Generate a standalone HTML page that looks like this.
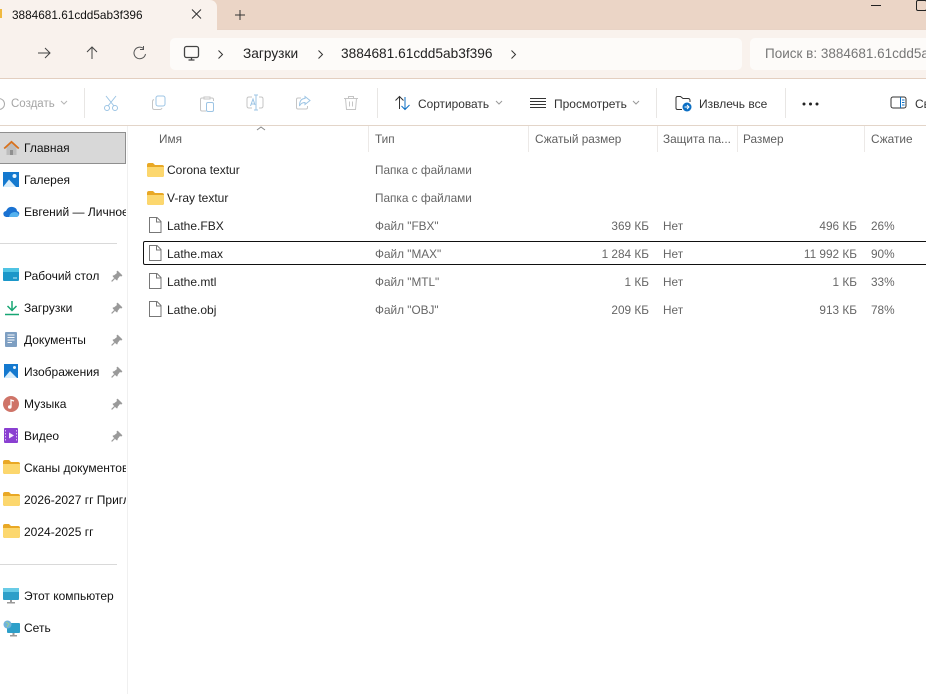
<!DOCTYPE html>
<html lang="ru"><head><meta charset="utf-8"><title>3884681.61cdd5ab3f396</title>
<style>
html,body{margin:0;padding:0;background:#fff}
#a{position:relative;width:926px;height:694px;overflow:hidden;background:#fff;font-family:"Liberation Sans",sans-serif;font-size:12px;color:#1a1a1a}
#a div,#a svg{position:absolute}
.t{white-space:nowrap;line-height:16px;height:16px}
.s{font-size:12px;color:#111;left:24px;width:102px;overflow:hidden}
.h{color:#5f5f5f;top:131px;font-size:11.8px}
.c{color:#666;font-size:11.8px}
.r{text-align:right;color:#666;font-size:11.8px}
.n{left:167px;color:#222;font-size:12px}
.v{background:#ece9e7;width:1px;top:126px;height:26px}
.d{background:#e8e6e4;width:1px;top:88px;height:30px}
.g{color:#333;font-size:12px;top:96px}
</style></head><body><div id="a">

<div style="left:0;top:0;width:926px;height:30px;background:#ebd5c6"></div>
<div style="left:0;top:29px;width:926px;height:50px;background:#f9f2ed;border-top:1px solid #e8d3c5;border-bottom:1px solid #e3cfc0;box-sizing:border-box"></div>
<div style="left:0;top:0;width:217px;height:31px;background:#f9f2ed;border-top-right-radius:7px"></div>
<div style="left:0;top:9px;width:2px;height:9px;background:#f0b93f"></div>
<div class="t" style="left:12px;top:7px;color:#111;font-size:11.8px">3884681.61cdd5ab3f396</div>
<svg style="left:190px;top:7px" width="14" height="14" fill="none" stroke="#333"><path d="M2 2.500L11 11.500M11 2.500L2 11.500"/></svg>
<svg style="left:233px;top:8px" width="14" height="14" fill="none" stroke="#333"><path d="M7 2V12M2 7H12"/></svg>
<div style="left:871px;top:5px;width:10px;height:1px;background:#222"></div>
<div style="left:916px;top:0;width:9px;height:9px;border:1px solid #222;border-radius:2px"></div>

<svg style="left:36px;top:45px" width="16" height="16" fill="none" stroke="#444"><path d="M2 8H14M9 3L14 8L9 13"/></svg>
<svg style="left:84px;top:45px" width="16" height="16" fill="none" stroke="#444"><path d="M8 14V2M3 7L8 2L13 7"/></svg>
<svg style="left:132px;top:45px" width="16" height="16" fill="none" stroke="#555"><path d="M13.500 9A5.800 5.800 0 1 1 11.500 3.500M11.500 1V4.500H8"/></svg>
<div style="left:170px;top:38px;width:572px;height:32px;background:#fdfbf9;border-radius:5px"></div>
<svg style="left:183px;top:45px" width="17" height="17" fill="none" stroke="#444" stroke-width="1.300"><rect x="1.500" y="1.500" width="14" height="11" rx="2"/><path d="M5.500 15H11.500M8.500 13V15"/></svg>
<svg style="left:218px;top:50px" width="6" height="10" fill="none" stroke="#333"><path d="M.5.500L4.500 4.500L.5 8.500"/></svg>
<div class="t" style="left:243px;top:46px;font-size:13.7px;color:#222">Загрузки</div>
<svg style="left:318px;top:50px" width="6" height="10" fill="none" stroke="#333"><path d="M.5.500L4.500 4.500L.5 8.500"/></svg>
<div class="t" style="left:341px;top:46px;font-size:13.7px;color:#222">3884681.61cdd5ab3f396</div>
<svg style="left:511px;top:50px" width="6" height="10" fill="none" stroke="#333"><path d="M.5.500L4.500 4.500L.5 8.500"/></svg>
<div style="left:750px;top:38px;width:190px;height:32px;background:#fdfbf9;border-radius:5px"></div>
<div class="t" style="left:765px;top:46px;font-size:13.5px;color:#777">Поиск в: 3884681.61cdd5a</div>

<svg style="left:0;top:96px" width="6" height="16" fill="none" stroke="#aaa"><circle cx="-1" cy="8" r="5.500"/></svg>
<div class="t" style="left:11px;top:96px;color:#a5a5a5;font-size:11.5px">Создать</div>
<svg style="left:60px;top:100px" width="8" height="6" fill="none" stroke="#b5b5b5"><path d="M1 1L4 4L7 1"/></svg>
<div class="d" style="left:84px"></div>
<svg style="left:103px;top:95px" width="16" height="17" fill="none" stroke="#9cc4e4"><path d="M3 1L11 11M13 1L5 11"/><circle cx="4" cy="13" r="2.500"/><circle cx="12" cy="13" r="2.500"/></svg>
<svg style="left:151px;top:95px" width="16" height="16" fill="none" stroke="#9cc4e4"><rect x="5" y="1" width="9" height="10" rx="2"/><path d="M3 4.500Q1.500 5 1.500 6.500V12.500Q1.500 14.500 3.500 14.500H9Q10.500 14.500 11 13" stroke="#c5c5c5"/></svg>
<svg style="left:199px;top:95px" width="16" height="17" fill="none" stroke="#c5c5c5"><path d="M5 3H3Q1.500 3 1.500 4.500V14.500Q1.500 16 3 16H7M11 3H13Q14.500 3 14.500 4.500V6M5 2H11V4H5Z"/><rect x="7.500" y="7.500" width="7" height="9" rx="1.500" stroke="#9cc4e4"/></svg>
<svg style="left:246px;top:94px" width="18" height="18" fill="none" stroke="#c5c5c5"><path d="M6 3H3Q1 3 1 5V12Q1 14 3 14H6M13 3H15Q17 3 17 5V12Q17 14 15 14H13"/><path d="M10 1V16M8 1H12M8 16H12" stroke="#9cc4e4"/><path d="M4.500 12L7 5L9 11M5.500 10H8.500" stroke="#9cc4e4"/></svg>
<svg style="left:295px;top:95px" width="16" height="16" fill="none" stroke="#c5c5c5"><path d="M6 3H3Q1.500 3 1.500 4.500V12.500Q1.500 14 3 14H11Q12.500 14 12.500 12.500V11"/><path d="M10 1.500L15 5.500L10 9.500V7.500Q6 7.500 4.500 11Q4.500 3.500 10 3.500Z" stroke="#9cc4e4"/></svg>
<svg style="left:343px;top:95px" width="16" height="16" fill="none" stroke="#c5c5c5"><path d="M1 3.500H15M5.500 3.500V1.500H10.500V3.500M2.500 3.500L3.500 14.500H12.500L13.500 3.500M6.500 6.500V11.500M9.500 6.500V11.500"/></svg>
<div class="d" style="left:377px"></div>
<svg style="left:394px;top:95px" width="17" height="16" fill="none" stroke="#333"><path d="M5.500 14V1.500M1.500 5.500L5.500 1.500L9.500 5.500"/><path d="M11 2V14.500M7.500 11L11 14.500L15.500 10" stroke="#0b6fc4"/></svg>
<div class="t g" style="left:418px;font-size:11.9px">Сортировать</div>
<svg style="left:495px;top:100px" width="8" height="6" fill="none" stroke="#999"><path d="M1 1L4 4L7 1"/></svg>
<svg style="left:530px;top:97px" width="16" height="12" fill="none" stroke="#333"><path d="M0 1.500H16M0 4.500H16M0 7.500H16M0 10.500H16"/></svg>
<div class="t g" style="left:554px">Просмотреть</div>
<svg style="left:632px;top:100px" width="8" height="6" fill="none" stroke="#999"><path d="M1 1L4 4L7 1"/></svg>
<div class="d" style="left:656px"></div>
<svg style="left:675px;top:95px" width="18" height="17" fill="none" stroke="#333"><path d="M7 14.500H2.500Q1 14.500 1 13V3Q1 1.500 2.500 1.500H5.500L8 3.500H13Q15 3.500 15 5.500V7"/><circle cx="12" cy="12" r="4.500" fill="#0b6fc4" stroke="none"/><path d="M9.500 12H14M12 10L14 12L12 14" stroke="#fff"/></svg>
<div class="t g" style="left:699px">Извлечь все</div>
<div class="d" style="left:785px"></div>
<svg style="left:802px;top:102px" width="18" height="4" fill="#222"><circle cx="2" cy="2" r="1.500"/><circle cx="8.500" cy="2" r="1.500"/><circle cx="15" cy="2" r="1.500"/></svg>
<svg style="left:890px;top:96px" width="18" height="14" fill="none" stroke="#333"><rect x="1" y="1" width="15" height="11" rx="2"/><path d="M10.500 1V12" stroke="#0b6fc4"/><path d="M12 4H14.500M12 6.500H14.500M12 9H14.500" stroke="#0b6fc4"/></svg>
<div class="t g" style="left:915px">Св</div>

<div style="left:0;top:125px;width:926px;height:1px;background:#e3d5c9"></div>
<div style="left:127px;top:126px;width:1px;height:568px;background:#f0f0f0"></div>

<div style="left:-2px;top:132px;width:126px;height:30px;background:#d8d8d8;border:1px solid #8f8f8f"></div>
<svg style="left:3px;top:140px" width="17" height="16"><path d="M3.500 7V15H13.500V7L8.500 2.500Z" fill="#bdbdbd"/><rect x="7" y="10" width="3" height="5" fill="#8f8f8f"/><path d="M1.200 8.500L8.500 1.800L15.800 8.500" fill="none" stroke="#d9711c" stroke-width="1.800"/></svg>
<div class="t s" style="top:140px">Главная</div>
<svg style="left:3px;top:172px" width="16" height="16"><rect width="16" height="15" fill="#1479cf"/><path d="M0 15L6 7.500L13 15Z" fill="#d8eefc"/><circle cx="11.500" cy="4" r="2" fill="#e8f6ff"/></svg>
<div class="t s" style="top:172px">Галерея</div>
<svg style="left:3px;top:205px" width="17" height="13"><path d="M1 11Q-1 7 3 6Q5 1 10 2Q14 3 14 6Q17 7 16 10Q15 12 13 12H3Z" fill="#1a72d2"/><path d="M6 12Q7 7 12 7Q15 7 16 10Q15 12 13 12Z" fill="#55b2ee"/></svg>
<div class="t s" style="top:204px">Евгений — Личное</div>
<div style="left:0;top:243px;width:117px;height:1px;background:#d9d9d9"></div>

<svg style="left:3px;top:268px" width="16" height="14"><rect width="16" height="13" rx="1" fill="#1b97c9"/><rect x="0" y="0" width="16" height="4" fill="#4fc3e3"/><path d="M10 10H14" stroke="#bfeaf8"/></svg>
<div class="t s" style="top:268px">Рабочий стол</div>
<svg style="left:5px;top:300px" width="14" height="16" fill="none" stroke="#17a673" stroke-width="1.500"><path d="M7 1V10M2.500 6L7 10.500L11.500 6M0 14.500H14"/></svg>
<div class="t s" style="top:300px">Загрузки</div>
<svg style="left:5px;top:332px" width="12" height="16"><rect width="12" height="15" rx="1" fill="#7e9fc2"/><path d="M2.500 3H9.500M2.500 5.500H9.500M2.500 8H9.500M2.500 10.500H7" stroke="#f4f7fb"/></svg>
<div class="t s" style="top:332px">Документы</div>
<svg style="left:4px;top:364px" width="14" height="14"><rect width="14" height="14" fill="#1479cf"/><path d="M0 14L6 7L13 14Z" fill="#d8eefc"/><circle cx="10.500" cy="3.500" r="1.500" fill="#e8f6ff"/></svg>
<div class="t s" style="top:364px">Изображения</div>
<svg style="left:3px;top:396px" width="16" height="16"><circle cx="8" cy="8" r="8" fill="#cf7468"/><path d="M8 11V4L11 5" fill="none" stroke="#fff" stroke-width="1.300"/><circle cx="6.800" cy="11" r="1.800" fill="#fff"/></svg>
<div class="t s" style="top:396px">Музыка</div>
<svg style="left:4px;top:428px" width="14" height="16"><rect width="14" height="15" rx="1" fill="#8a3fd1"/><path d="M5 4.500L10 7.500L5 10.500Z" fill="#f3e9fc"/><path d="M1.500 2V13M12.500 2V13" stroke="#d9bdf3" stroke-dasharray="1.500 1.500"/></svg>
<div class="t s" style="top:428px">Видео</div>

<svg style="left:3px;top:460px" width="17" height="14"><path d="M0 2Q0 0 2 0H6L8 2H15Q17 2 17 4V12Q17 14 15 14H2Q0 14 0 12Z" fill="#e9a825"/><path d="M0 4H17V12Q17 14 15 14H2Q0 14 0 12Z" fill="#fcd76e"/></svg>
<div class="t s" style="top:460px">Сканы документов</div>
<svg style="left:3px;top:492px" width="17" height="14"><path d="M0 2Q0 0 2 0H6L8 2H15Q17 2 17 4V12Q17 14 15 14H2Q0 14 0 12Z" fill="#e9a825"/><path d="M0 4H17V12Q17 14 15 14H2Q0 14 0 12Z" fill="#fcd76e"/></svg>
<div class="t s" style="top:492px">2026-2027 гг Пригл</div>
<svg style="left:3px;top:524px" width="17" height="14"><path d="M0 2Q0 0 2 0H6L8 2H15Q17 2 17 4V12Q17 14 15 14H2Q0 14 0 12Z" fill="#e9a825"/><path d="M0 4H17V12Q17 14 15 14H2Q0 14 0 12Z" fill="#fcd76e"/></svg>
<div class="t s" style="top:524px">2024-2025 гг</div>
<div style="left:0;top:564px;width:117px;height:1px;background:#d9d9d9"></div>

<svg style="left:3px;top:588px" width="16" height="16"><rect width="16" height="12" rx="1" fill="#2e9fc9"/><path d="M0 0H16V4H0Z" fill="#69cbe6"/><rect x="7" y="12" width="2" height="2" fill="#9a9a9a"/><rect x="4" y="14" width="8" height="1.500" fill="#9a9a9a"/></svg>
<div class="t s" style="top:588px">Этот компьютер</div>
<svg style="left:3px;top:620px" width="17" height="17"><rect x="4" y="3" width="13" height="10" rx="1" fill="#2e9fc9"/><circle cx="4.500" cy="4.500" r="4" fill="#6fb3dc"/><path d="M3 2L6 4L4 7" stroke="#9bd08f" fill="none"/><rect x="9.500" y="13" width="2" height="2" fill="#9a9a9a"/><rect x="7" y="15" width="7" height="1.500" fill="#9a9a9a"/></svg>
<div class="t s" style="top:620px">Сеть</div>

<svg style="left:111px;top:270px" width="12" height="12" viewBox="0 0 10 10" fill="#9a9a9a"><path d="M5.500 0.500L9.500 4.500L8.500 5.500L7.500 5L5.500 7.500L5.500 8.500L4.500 8.500L1.500 5.500L1.500 4.500L2.500 4.500L5 2.500L4.500 1.500Z"/><path d="M3 7L.5 9.500" stroke="#9a9a9a"/></svg>
<svg style="left:111px;top:302px" width="12" height="12" viewBox="0 0 10 10" fill="#9a9a9a"><path d="M5.500 0.500L9.500 4.500L8.500 5.500L7.500 5L5.500 7.500L5.500 8.500L4.500 8.500L1.500 5.500L1.500 4.500L2.500 4.500L5 2.500L4.500 1.500Z"/><path d="M3 7L.5 9.500" stroke="#9a9a9a"/></svg>
<svg style="left:111px;top:334px" width="12" height="12" viewBox="0 0 10 10" fill="#9a9a9a"><path d="M5.500 0.500L9.500 4.500L8.500 5.500L7.500 5L5.500 7.500L5.500 8.500L4.500 8.500L1.500 5.500L1.500 4.500L2.500 4.500L5 2.500L4.500 1.500Z"/><path d="M3 7L.5 9.500" stroke="#9a9a9a"/></svg>
<svg style="left:111px;top:366px" width="12" height="12" viewBox="0 0 10 10" fill="#9a9a9a"><path d="M5.500 0.500L9.500 4.500L8.500 5.500L7.500 5L5.500 7.500L5.500 8.500L4.500 8.500L1.500 5.500L1.500 4.500L2.500 4.500L5 2.500L4.500 1.500Z"/><path d="M3 7L.5 9.500" stroke="#9a9a9a"/></svg>
<svg style="left:111px;top:398px" width="12" height="12" viewBox="0 0 10 10" fill="#9a9a9a"><path d="M5.500 0.500L9.500 4.500L8.500 5.500L7.500 5L5.500 7.500L5.500 8.500L4.500 8.500L1.500 5.500L1.500 4.500L2.500 4.500L5 2.500L4.500 1.500Z"/><path d="M3 7L.5 9.500" stroke="#9a9a9a"/></svg>
<svg style="left:111px;top:430px" width="12" height="12" viewBox="0 0 10 10" fill="#9a9a9a"><path d="M5.500 0.500L9.500 4.500L8.500 5.500L7.500 5L5.500 7.500L5.500 8.500L4.500 8.500L1.500 5.500L1.500 4.500L2.500 4.500L5 2.500L4.500 1.500Z"/><path d="M3 7L.5 9.500" stroke="#9a9a9a"/></svg>

<svg style="left:256px;top:126px" width="10" height="5" fill="none" stroke="#888"><path d="M1 4L5 1L9 4"/></svg>
<div class="t h" style="left:159px">Имя</div>
<div class="v" style="left:368px"></div>
<div class="t h" style="left:375px">Тип</div>
<div class="v" style="left:528px"></div>
<div class="t h" style="left:535px">Сжатый размер</div>
<div class="v" style="left:657px"></div>
<div class="t h" style="left:663px">Защита па...</div>
<div class="v" style="left:737px"></div>
<div class="t h" style="left:743px">Размер</div>
<div class="v" style="left:864px"></div>
<div class="t h" style="left:871px">Сжатие</div>

<div style="left:143px;top:241px;width:800px;height:22px;border:1px solid #111;border-radius:2px"></div>

<svg style="left:147px;top:163px" width="17" height="14"><path d="M0 2Q0 0 2 0H6L8 2H15Q17 2 17 4V12Q17 14 15 14H2Q0 14 0 12Z" fill="#e9a825"/><path d="M0 4H17V12Q17 14 15 14H2Q0 14 0 12Z" fill="#fcd76e"/></svg>
<svg style="left:147px;top:191px" width="17" height="14"><path d="M0 2Q0 0 2 0H6L8 2H15Q17 2 17 4V12Q17 14 15 14H2Q0 14 0 12Z" fill="#e9a825"/><path d="M0 4H17V12Q17 14 15 14H2Q0 14 0 12Z" fill="#fcd76e"/></svg>
<svg style="left:149px;top:217px" width="13" height="17" fill="#fff" stroke="#777"><path d="M.5.500H8L12 4.500V15.500H.5Z"/><path d="M7.500.500V5H12" fill="none"/></svg>
<svg style="left:149px;top:245px" width="13" height="17" fill="#fff" stroke="#777"><path d="M.5.500H8L12 4.500V15.500H.5Z"/><path d="M7.500.500V5H12" fill="none"/></svg>
<svg style="left:149px;top:273px" width="13" height="17" fill="#fff" stroke="#777"><path d="M.5.500H8L12 4.500V15.500H.5Z"/><path d="M7.500.500V5H12" fill="none"/></svg>
<svg style="left:149px;top:301px" width="13" height="17" fill="#fff" stroke="#777"><path d="M.5.500H8L12 4.500V15.500H.5Z"/><path d="M7.500.500V5H12" fill="none"/></svg>

<div class="t n" style="top:162px">Corona textur</div>
<div class="t n" style="top:190px">V-ray textur</div>
<div class="t n" style="top:218px">Lathe.FBX</div>
<div class="t n" style="top:246px">Lathe.max</div>
<div class="t n" style="top:274px">Lathe.mtl</div>
<div class="t n" style="top:302px">Lathe.obj</div>

<div class="t c" style="left:375px;top:162px">Папка с файлами</div>
<div class="t c" style="left:375px;top:190px">Папка с файлами</div>
<div class="t c" style="left:375px;top:218px">Файл "FBX"</div>
<div class="t c" style="left:375px;top:246px">Файл "MAX"</div>
<div class="t c" style="left:375px;top:274px">Файл "MTL"</div>
<div class="t c" style="left:375px;top:302px">Файл "OBJ"</div>

<div class="t r" style="left:549px;width:100px;top:218px">369 КБ</div>
<div class="t r" style="left:549px;width:100px;top:246px">1 284 КБ</div>
<div class="t r" style="left:549px;width:100px;top:274px">1 КБ</div>
<div class="t r" style="left:549px;width:100px;top:302px">209 КБ</div>

<div class="t c" style="left:663px;top:218px">Нет</div>
<div class="t c" style="left:663px;top:246px">Нет</div>
<div class="t c" style="left:663px;top:274px">Нет</div>
<div class="t c" style="left:663px;top:302px">Нет</div>

<div class="t r" style="left:757px;width:100px;top:218px">496 КБ</div>
<div class="t r" style="left:757px;width:100px;top:246px">11 992 КБ</div>
<div class="t r" style="left:757px;width:100px;top:274px">1 КБ</div>
<div class="t r" style="left:757px;width:100px;top:302px">913 КБ</div>

<div class="t c" style="left:871px;top:218px">26%</div>
<div class="t c" style="left:871px;top:246px">90%</div>
<div class="t c" style="left:871px;top:274px">33%</div>
<div class="t c" style="left:871px;top:302px">78%</div>

</div></body></html>
